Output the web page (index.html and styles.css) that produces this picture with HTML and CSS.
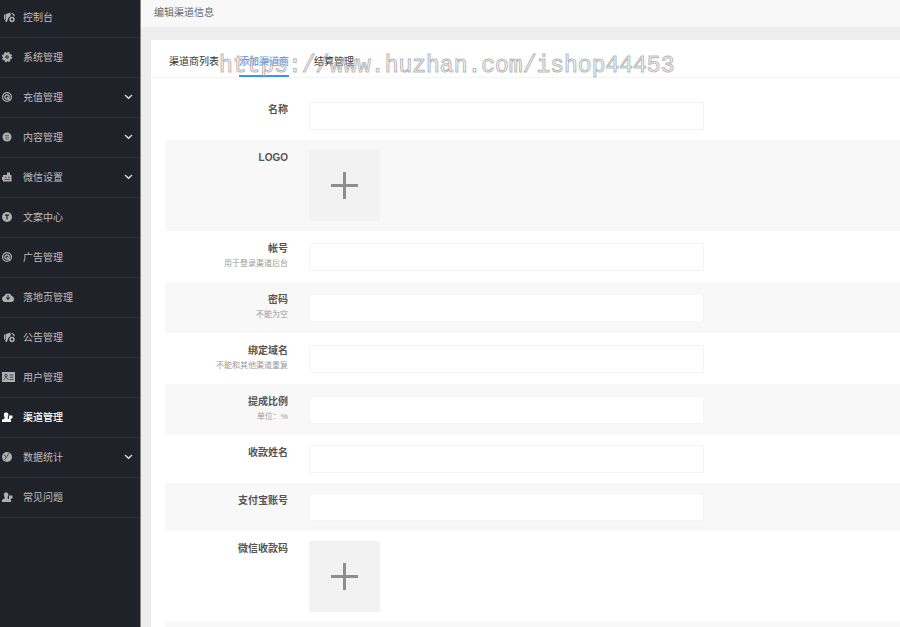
FILE: index.html
```html
<!DOCTYPE html>
<html lang="zh-CN">
<head>
    <meta charset="UTF-8">
    <meta name="viewport" content="width=device-width, initial-scale=1.0">
    <title>编辑渠道信息</title>
    <link rel="stylesheet" href="styles.css">
</head>
<body>
    <svg class="sprite" aria-hidden="true">
        <symbol id="i-horn" viewBox="0 0 15 15">
            <path fill="currentColor" d="M6 4l4.500-1.500v4A3.600 3.600 0 0 0 7.800 11L6 10z"/>
            <path fill="currentColor" d="M4 4.500h1.500v5H4zM5 10h2v2H6z"/>
            <circle cx="12" cy="9.500" r="1.900" fill="none" stroke="currentColor" stroke-width="1.500"/>
            <path d="M11.500 3.500c1.800.2 2.600 1 2.800 2.800" fill="none" stroke="currentColor" stroke-width="1.200"/>
        </symbol>
        <symbol id="i-gear" viewBox="0 0 15 15">
            <circle cx="7" cy="7" r="3" fill="none" stroke="currentColor" stroke-width="2.400"/>
            <circle cx="7" cy="7" r="4.400" fill="none" stroke="currentColor" stroke-width="1.600" stroke-dasharray="1.900 1.556"/>
            <circle cx="7" cy="7" r=".7" fill="currentColor"/>
        </symbol>
        <symbol id="i-target" viewBox="0 0 15 15">
            <circle cx="7" cy="7" r="4.400" fill="none" stroke="currentColor" stroke-width="1.300"/>
            <circle cx="7" cy="7" r="2.200" fill="none" stroke="currentColor" stroke-width="1.300"/>
            <path d="M7 7l3 3.500" stroke="currentColor" stroke-width="1.200"/>
        </symbol>
        <symbol id="i-doc" viewBox="0 0 15 15">
            <circle cx="7" cy="7" r="4.500" fill="currentColor"/>
            <path d="M5 5.500h4M5 7.200h4M5 9h4" stroke="#20222a" stroke-width=".5"/>
        </symbol>
        <symbol id="i-robot" viewBox="0 0 15 15">
            <path fill="currentColor" d="M3 5h4V2.500h3V5h1.500v6.500H3zM2 7h1v3H2z"/>
            <path d="M4.500 7.300h2M8 7.300h2M4.500 9.500h5.500" stroke="#20222a" stroke-width=".7"/>
        </symbol>
        <symbol id="i-text" viewBox="0 0 15 15">
            <circle cx="7" cy="7" r="5" fill="currentColor"/>
            <path d="M5 5.200h4M7 5.200v4.300" stroke="#20222a" stroke-width="1.200"/>
        </symbol>
        <symbol id="i-cloud" viewBox="0 0 15 15">
            <path fill="currentColor" d="M5 12a3 3 0 0 1-.7-5.900 4 4 0 0 1 7.400 0A3 3 0 0 1 11.500 12z"/>
            <path d="M8 5v4M6.300 7.500L8 9.500l1.700-2" fill="none" stroke="#20222a" stroke-width="1.100"/>
        </symbol>
        <symbol id="i-card" viewBox="0 0 15 15">
            <rect fill="currentColor" x="2" y="2" width="13" height="10"/>
            <circle cx="6" cy="5.500" r="1.300" fill="none" stroke="#20222a" stroke-width=".8"/>
            <path d="M3.800 10c.4-3 4-3 4.400 0M9.500 5H13.500M9.500 7.200H13.500M9.500 9.500H13.500" fill="none" stroke="#20222a" stroke-width=".7"/>
        </symbol>
        <symbol id="i-user" viewBox="0 0 15 15">
            <path fill="currentColor" d="M6 2.500c2.600 0 3 2.300 1.700 4.500v1.500L11 9.700V12H2V9.700l2.500-1.200V7C3.500 4.800 3.600 2.500 6 2.500z"/>
            <path fill="currentColor" d="M9 5.500h3.500v3H11v1H9z"/>
        </symbol>
        <symbol id="i-pie" viewBox="0 0 15 15">
            <circle cx="7" cy="7" r="5" fill="currentColor"/>
            <path d="M4 5l2.500 2L9 3M6.500 7L4.500 10" fill="none" stroke="#20222a" stroke-width=".7"/>
        </symbol>
        <symbol id="i-down" viewBox="0 0 9 9">
            <path d="M1 2l3.500 3.300L8 2" fill="none" stroke="currentColor" stroke-width="1.300"/>
        </symbol>
    </svg>

    <nav class="sidebar">
        <ul class="menu">
            <li><a href="#"><svg class="icon"><use href="#i-horn"/></svg>控制台</a></li>
            <li><a href="#"><svg class="icon"><use href="#i-gear"/></svg>系统管理</a></li>
            <li><a href="#"><svg class="icon"><use href="#i-target"/></svg>充值管理<svg class="arrow"><use href="#i-down"/></svg></a></li>
            <li><a href="#"><svg class="icon"><use href="#i-doc"/></svg>内容管理<svg class="arrow"><use href="#i-down"/></svg></a></li>
            <li><a href="#"><svg class="icon"><use href="#i-robot"/></svg>微信设置<svg class="arrow"><use href="#i-down"/></svg></a></li>
            <li><a href="#"><svg class="icon"><use href="#i-text"/></svg>文案中心</a></li>
            <li><a href="#"><svg class="icon"><use href="#i-target"/></svg>广告管理</a></li>
            <li><a href="#"><svg class="icon"><use href="#i-cloud"/></svg>落地页管理</a></li>
            <li><a href="#"><svg class="icon"><use href="#i-horn"/></svg>公告管理</a></li>
            <li><a href="#"><svg class="icon"><use href="#i-card"/></svg>用户管理</a></li>
            <li><a href="#" class="active"><svg class="icon"><use href="#i-user"/></svg>渠道管理</a></li>
            <li><a href="#"><svg class="icon"><use href="#i-pie"/></svg>数据统计<svg class="arrow"><use href="#i-down"/></svg></a></li>
            <li><a href="#"><svg class="icon"><use href="#i-user"/></svg>常见问题</a></li>
        </ul>
    </nav>

    <main class="main">
        <header class="topbar">编辑渠道信息</header>

        <section class="card">
            <div class="tabs">
                <a href="#">渠道商列表</a>
                <a href="#" class="current">添加渠道商</a>
                <a href="#">结算管理</a>
                <span class="watermark">https://www.huzhan.com/ishop44453</span>
            </div>

            <form class="form">
                <div class="row">
                    <label for="name">名称</label>
                    <input type="text" id="name">
                </div>
                <div class="row">
                    <label for="logo">LOGO</label>
                    <button type="button" class="upload" id="logo"></button>
                </div>
                <div class="row">
                    <label for="account">帐号<small>用于登录渠道后台</small></label>
                    <input type="text" id="account">
                </div>
                <div class="row">
                    <label for="password">密码<small>不能为空</small></label>
                    <input type="password" id="password">
                </div>
                <div class="row">
                    <label for="domain">绑定域名<small>不能和其他渠道重复</small></label>
                    <input type="text" id="domain">
                </div>
                <div class="row">
                    <label for="rate">提成比例<small>单位：%</small></label>
                    <input type="text" id="rate">
                </div>
                <div class="row">
                    <label for="payee">收款姓名</label>
                    <input type="text" id="payee">
                </div>
                <div class="row">
                    <label for="alipay">支付宝账号</label>
                    <input type="text" id="alipay">
                </div>
                <div class="row">
                    <label for="wechat">微信收款码</label>
                    <button type="button" class="upload" id="wechat"></button>
                </div>
                <div class="row"></div>
            </form>
        </section>
    </main>
</body>
</html>
```
FILE: styles.css
```css
/* General Styles */
* {
    box-sizing: border-box;
}

body {
    margin: 0;
    display: flex;
    height: 100vh;
    overflow: hidden;
    font-family: "Liberation Sans", "Noto Sans CJK SC", sans-serif;
    font-size: 10px;
    line-height: 15px;
    color: #555;
    background-color: #ededed;
}

a {
    color: inherit;
    text-decoration: none;
}

.sprite {
    position: absolute;
    width: 0;
    height: 0;
}

/* Sidebar */
.sidebar {
    flex: none;
    width: 141px;
    background-color: #20222a;
    border-right: 1px solid #85868a;
}

.menu {
    list-style: none;
    margin: -2px 0 0;
    padding: 0;
}

.menu a {
    display: flex;
    align-items: center;
    height: 40px;
    padding: 0 7px 0 0;
    color: #bcbdbf;
    border-bottom: 1px solid #2a3138;
}

.menu a.active {
    color: #fff;
    font-weight: 500;
}

.icon {
    width: 15px;
    height: 15px;
    margin-right: 8px;
    color: #b0b0b0;
}

.active .icon {
    color: #fff;
}

.arrow {
    width: 9px;
    height: 9px;
    margin-left: auto;
    color: #e0e0e0;
}

/* Content */
.main {
    flex: 1;
    min-width: 0;
    overflow: hidden;
}

.topbar {
    height: 27px;
    padding: 5px 13px;
    color: #666;
    background-color: #f8f8f8;
}

.card {
    margin: 13px 0 0 10px;
    background-color: #fff;
}

.tabs {
    position: relative;
    display: flex;
    gap: 20px;
    padding: 14px 18px 0;
    color: #333;
    border-bottom: 1px solid #f4f4f4;
}

.tabs a {
    min-width: 50px;
    padding-bottom: 6px;
    text-align: center;
    border-bottom: 2px solid transparent;
}

.tabs a.current {
    color: #3d8ffb;
    border-color: #3d8ffb;
}

.watermark {
    position: absolute;
    left: 68px;
    top: 12px;
    font-family: "Liberation Mono", monospace;
    font-size: 23px;
    line-height: 28px;
    color: rgba(255, 255, 255, 0.3);
    -webkit-text-stroke: 1px rgba(150, 150, 150, 0.7);
    pointer-events: none;
}

/* Form */
.form {
    padding: 14px 0 0 14px;
}

.row {
    display: flex;
    align-items: center;
    gap: 21px;
    min-height: 48px;
    padding: 10px 0;
}

.row:nth-child(even) {
    background-color: #f8f8f8;
}

.row label {
    align-self: flex-start;
    flex: none;
    width: 123px;
    text-align: right;
    font-weight: bold;
}

.row small {
    display: block;
    font-size: 8px;
    line-height: 16px;
    font-weight: normal;
    color: #999;
}

.row input {
    flex: 1;
    max-width: 395px;
    height: 28px;
    padding: 0 8px;
    border: 1px solid #f4f4f4;
    background-color: #fff;
    font: inherit;
}

.row input:focus {
    outline: none;
    border-color: #3d8ffb;
}

/* Upload box with a plus sign */
.upload {
    width: 71px;
    height: 71px;
    padding: 0;
    border: none;
    background:
        linear-gradient(#8e8e8e, #8e8e8e) center / 27px 3px no-repeat,
        linear-gradient(#8e8e8e, #8e8e8e) center / 3px 27px no-repeat,
        #f2f2f2;
    cursor: pointer;
}
```
